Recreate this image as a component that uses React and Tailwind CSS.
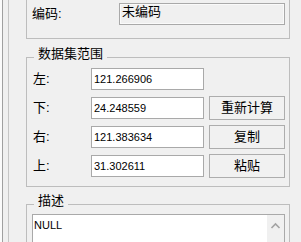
import React from "react";

const cjk = "font-['Liberation_Sans','Noto_Sans_CJK_SC',sans-serif]";
const num = "font-['Liberation_Sans',sans-serif]";

const GroupTitle = ({ title }) => (
  <span
    className={`absolute -top-[11px] left-[7px] px-[4px] bg-[#f0f0f0] text-[13px] leading-[14px] text-black ${cjk}`}
  >
    {title}
  </span>
);

const CoordRow = ({ label, value, button }) => (
  <div className="flex items-center h-[22px]">
    <span className={`w-[58px] text-[13px] leading-[22px] text-black ${cjk}`}>
      {label}
    </span>
    <div
      className={`w-[113px] h-[22px] border border-[#a9a9a9] bg-white pl-[2px] text-[11px] leading-[20px] text-black ${num}`}
    >
      {value}
    </div>
    {button && (
      <button
        className={`ml-[5px] w-[76px] h-[24px] border border-[#adadad] bg-[#f1f1f1] text-[13px] leading-[22px] text-black ${cjk}`}
      >
        {button}
      </button>
    )}
  </div>
);

const App = () => {
  const rows = [
    { label: "左:", value: "121.266906" },
    { label: "下:", value: "24.248559", button: "重新计算" },
    { label: "右:", value: "121.383634", button: "复制" },
    { label: "上:", value: "31.302611", button: "粘贴" },
  ];

  return (
    <div className="w-[301px] h-[242px] overflow-hidden bg-[#f0f0f0] flex">
      <div className="w-[2px] bg-[#fbfbfb]" />
      <div className="flex border-l border-[#a0a0a0] pl-[5px]">
        <div className="flex border-l border-[#c6c6c6] pl-[17px]">
          <div className="w-[264px] flex flex-col">
            {/* 编码 */}
            <div className="h-[39px] border-x border-b border-[#bdbdbd] pt-[3px] pl-[5px] flex items-start">
              <span className={`w-[87px] text-[13px] leading-[22px] text-black ${cjk}`}>
                编码:
              </span>
              <div
                className={`w-[166px] h-[22px] border border-[#a9a9a9] shadow-[inset_0_0_0_1px_#fafafa] bg-[#f0f0f0] pl-[2px] text-[13px] leading-[16px] text-black ${cjk}`}
              >
                未编码
              </div>
            </div>

            {/* 数据集范围 */}
            <div className="relative mt-[18px] h-[130px] border border-[#bdbdbd] pt-[10px] pl-[6px] flex flex-col gap-[7px]">
              <GroupTitle title="数据集范围" />
              {rows.map((r) => (
                <CoordRow key={r.label} {...r} />
              ))}
            </div>

            {/* 描述 */}
            <div className="relative mt-[17px] flex-1 border-x border-t border-[#bdbdbd] pt-[9px] pl-[5px] flex flex-col">
              <GroupTitle title="描述" />
              <div className="w-[253px] flex-1 border-x border-t border-[#a9a9a9] bg-white flex">
                <div className={`flex-1 pl-[1px] pt-[4px] text-[11px] leading-[13px] text-black ${num}`}>
                  NULL
                </div>
                <div className="w-[17px] bg-[#f0f0f0] flex justify-center">
                  <svg width="17" height="20" viewBox="0 0 17 20" className="mt-[1px]">
                    <polyline
                      points="4.5,12 8.5,8 12.5,12"
                      fill="none"
                      stroke="#a3a3a3"
                      strokeWidth="1.6"
                    />
                  </svg>
                </div>
              </div>
            </div>
          </div>
        </div>
      </div>
    </div>
  );
};

export default App;
